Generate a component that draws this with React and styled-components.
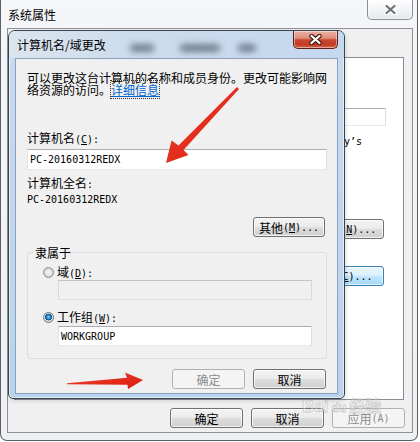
import React from "react";
import styled, { createGlobalStyle, css } from "styled-components";

const CJK = `"Noto Sans CJK SC", "Noto Sans", sans-serif`;
const MONO = `"DejaVu Sans Mono", "Liberation Mono", monospace`;

const Global = createGlobalStyle`
  html, body { margin: 0; padding: 0; background: #ffffff; }
  body { font-family: ${CJK}; font-size: 12px; color: #000; }
  * { box-sizing: border-box; }
`;

const Screen = styled.div`
  position: relative;
  width: 420px;
  height: 442px;
  overflow: hidden;
  background: #ffffff;
`;

const OuterWindow = styled.div`
  position: relative;
  width: 418px;
  height: 441px;
  display: flex;
  flex-direction: column;
  padding: 0 4px 7px 6px;
  border: 1px solid #5b5e63;
  border-top: none;
  border-radius: 0 0 7px 7px;
  background: linear-gradient(180deg, #f4f6f9 0%, #eef0f3 100%);
`;

const TitleBar = styled.div`
  height: ${(p) => p.$h}px;
  flex: none;
  display: flex;
  align-items: flex-start;
  ${(p) =>
    p.$glass &&
    css`
      padding-left: 8px;
      background: linear-gradient(90deg, #dbe5ef 0%, #cddcec 35%, #c4d8ef 100%);
    `}
`;

const TitleText = styled.div`
  margin: ${(p) => p.$mt}px 0 0 ${(p) => p.$ml}px;
  line-height: 14px;
  font-size: 12px;
  color: #000;
  white-space: nowrap;
`;

const GlassBlob = styled.div`
  width: ${(p) => p.$w}px;
  height: 8px;
  margin: 13px 0 0 ${(p) => p.$ml}px;
  border-radius: 4px;
  background: rgba(55, 66, 82, 0.6);
  filter: blur(3px);
`;

const CaptionClose = styled.div`
  margin-left: auto;
  margin-right: ${(p) => p.$mr}px;
  width: ${(p) => p.$w}px;
  height: ${(p) => p.$h}px;
  display: flex;
  align-items: center;
  justify-content: center;
  border: 1px solid ${(p) => (p.$red ? "#5f1f16" : "#8b9097")};
  border-top: none;
  border-radius: 0 0 5px 5px;
  background: ${(p) =>
    p.$red
      ? "linear-gradient(180deg, #eab3a6 0%, #df8c79 42%, #c9472f 52%, #c23b25 80%, #d4654b 100%)"
      : "linear-gradient(180deg, #fdfdfd 0%, #f2f4f6 50%, #e5e8eb 100%)"};
  box-shadow: inset 0 0 0 1px rgba(255, 255, 255, 0.45);
`;

const XGlyph = ({ fill, stroke }) => (
  <svg width="13" height="11" viewBox="0 0 13 11">
    <path d="M2.5 2 L10.5 9 M10.5 2 L2.5 9" stroke={stroke} strokeWidth="4.4" strokeLinecap="round" fill="none" />
    <path d="M2.5 2 L10.5 9 M10.5 2 L2.5 9" stroke={fill} strokeWidth="2.3" strokeLinecap="round" fill="none" />
  </svg>
);

const OuterClient = styled.div`
  flex: 1;
  display: flex;
  flex-direction: column;
  border: 1px solid #8e9095;
  background: #f0f0f0;
  padding: 28px 0 4px 6px;
`;

const TabPanel = styled.div`
  height: 343px;
  flex: none;
  margin-right: 8px;
  border: 1px solid #898c95;
  background: #ffffff;
  display: flex;
  flex-direction: column;
  align-items: flex-end;
  padding-top: 50px;
`;

const PanelItem = styled.div`
  margin-top: ${(p) => p.$mt || 0}px;
  margin-right: ${(p) => p.$mr || 0}px;
  align-self: ${(p) => (p.$end ? "flex-end" : "auto")};
`;

const MonoText = styled.div`
  margin-top: ${(p) => p.$mt || 0}px;
  font-family: ${MONO};
  font-size: 10px;
  line-height: ${(p) => p.$lh || 12}px;
  white-space: nowrap;
  color: #000;
`;

const ButtonRow = styled.div`
  display: flex;
  justify-content: flex-end;
  gap: 8px;
  margin-top: ${(p) => p.$mt}px;
  margin-right: ${(p) => p.$mr}px;
`;

const WinButton = styled.div`
  width: ${(p) => p.$w || 73}px;
  height: ${(p) => p.$h || 20}px;
  flex: none;
  display: flex;
  align-items: center;
  justify-content: center;
  border-radius: 3px;
  font-size: 12px;
  white-space: nowrap;
  border: 1px solid #707070;
  color: #000;
  background: linear-gradient(180deg, #f3f3f3 0%, #ebebeb 48%, #dddddd 52%, #cfcfcf 100%);
  box-shadow: inset 0 0 0 1px rgba(255, 255, 255, 0.75);
  ${(p) =>
    p.$disabled &&
    css`
      border-color: #adb2b5;
      color: #8c8c8c;
      background: #f4f4f4;
      box-shadow: none;
    `}
  ${(p) =>
    p.$focus &&
    css`
      border-color: #3c7fb1;
      background: linear-gradient(180deg, #eaf6fd 0%, #d9f0fc 48%, #bee6fd 52%, #a7d9f5 100%);
      box-shadow: inset 0 0 0 1px rgba(255, 255, 255, 0.6);
    `}
`;

const Key = styled.span`
  font-family: ${MONO};
  font-size: 10px;
`;

const U = styled.span`
  text-decoration: underline;
`;

const Dialog = styled.div`
  position: absolute;
  left: 7px;
  top: 30px;
  width: 337px;
  height: 369px;
  display: flex;
  flex-direction: column;
  border: 1px solid #36424f;
  border-radius: 7px 7px 5px 5px;
  background: linear-gradient(180deg, #c8dbef 0%, #bad2ec 100%);
  box-shadow: inset 0 0 0 1px rgba(255, 255, 255, 0.55), 1px 2px 4px rgba(0, 0, 0, 0.12);
  overflow: hidden;
`;

const DialogClient = styled.div`
  flex: 1;
  margin: 0 6px 4px 6px;
  border: 1px solid #8aa2bf;
  background: #f0f0f0;
  display: flex;
  flex-direction: column;
  padding: 13px 10px 0 11px;
`;

const Intro = styled.div`
  line-height: 12px;
  font-size: 12px;
  white-space: nowrap;
`;

const Link = styled.span`
  color: #0066cc;
  text-decoration: underline;
  outline: 1px dotted #333;
  outline-offset: 0;
`;

const Label = styled.div`
  margin-top: ${(p) => p.$mt}px;
  line-height: 13px;
  font-size: 12px;
  white-space: nowrap;
`;

const TextBox = styled.div`
  margin-top: ${(p) => p.$mt || 0}px;
  margin-left: ${(p) => p.$ml || 0}px;
  width: ${(p) => p.$w}px;
  height: ${(p) => p.$h || 21}px;
  flex: none;
  display: flex;
  align-items: center;
  padding-left: 2px;
  border: 1px solid;
  border-color: #abadb3 #dbdfe6 #e3e9ef #e2e3ea;
  background: ${(p) => (p.$disabled ? "#f0f0f0" : "#ffffff")};
  ${(p) =>
    p.$disabled &&
    css`
      border-color: #c2c4c8 #d6d8dc #dddfe2 #d6d8dc;
    `}
  font-family: ${MONO};
  font-size: 10px;
`;

const Group = styled.fieldset`
  margin: 9px 0 0 0;
  min-width: 0;
  padding: 6px 14px 12px 15px;
  border: 1px solid #d5dfe5;
  border-radius: 3px;
  display: flex;
  flex-direction: column;
`;

const Legend = styled.legend`
  margin-left: -10px;
  padding: 0 2px;
  line-height: 13px;
  font-size: 12px;
`;

const RadioRow = styled.div`
  margin-top: ${(p) => p.$mt || 0}px;
  display: flex;
  align-items: center;
  gap: 3px;
  line-height: 13px;
  font-size: 12px;
`;

const Radio = styled.span`
  width: 11px;
  height: 11px;
  flex: none;
  border-radius: 50%;
  border: 1px solid #8d8f93;
  background: radial-gradient(circle at 50% 50%, #fbfbfb 0px, #e6e6e6 2.5px, #cdcdcd 4.5px);
  ${(p) =>
    p.$checked &&
    css`
      border-color: #6f7478;
      background: radial-gradient(
        circle at 50% 45%,
        #9fe0fb 0px,
        #2a8fd1 1.6px,
        #0c4f8c 3.2px,
        #e9eef2 3.7px,
        #d2d4d6 4.6px
      );
    `}
`;

const ArrowLayer = styled.svg`
  position: absolute;
  left: 0;
  top: 0;
  width: 420px;
  height: 442px;
  pointer-events: none;
`;

const Watermark = styled.div`
  position: absolute;
  left: 302px;
  top: 393px;
  display: flex;
  align-items: baseline;
  gap: 3px;
  pointer-events: none;
  font-family: "Liberation Sans", ${CJK};
  font-weight: bold;
  font-size: 17px;
  color: rgba(255, 255, 255, 0.35);
  -webkit-text-stroke: 0.8px rgba(130, 130, 130, 0.35);
`;

const WatermarkSmall = styled.span`
  font-size: 12px;
`;

const WatermarkCJK = styled.span`
  font-family: ${CJK};
  font-size: 16px;
`;

export default function App() {
  return (
    <Screen>
      <Global />
      <OuterWindow>
        <TitleBar $h={28}>
          <TitleText $mt={8} $ml={1}>系统属性</TitleText>
          <CaptionClose $w={46} $h={20} $mr={0}>
            <XGlyph fill="#6f747b" stroke="#ffffff" />
          </CaptionClose>
        </TitleBar>
        <OuterClient>
          <TabPanel>
            <PanelItem $mr={17}>
              <TextBox $w={250} $h={18} />
            </PanelItem>
            <PanelItem $mt={9} $mr={41}>
              <MonoText $lh={13}>例如: "Kitchen Computer" 或 "Mary’s</MonoText>
            </PanelItem>
            <PanelItem $mt={71} $mr={19}>
              <WinButton $w={90}>
                网络 ID<Key>(<U>N</U>)...</Key>
              </WinButton>
            </PanelItem>
            <PanelItem $mt={27} $mr={19}>
              <WinButton $w={83} $focus>
                更改<Key>(<U>C</U>)...</Key>
              </WinButton>
            </PanelItem>
          </TabPanel>
          <ButtonRow $mt={8} $mr={7}>
            <WinButton>确定</WinButton>
            <WinButton>取消</WinButton>
            <WinButton $disabled>
              应用<Key>(A)</Key>
            </WinButton>
          </ButtonRow>
        </OuterClient>

        <Dialog>
          <TitleBar $h={27} $glass>
            <TitleText $mt={7} $ml={0}>计算机名/域更改</TitleText>
            <GlassBlob $w={24} $ml={24} />
            <GlassBlob $w={40} $ml={26} />
            <GlassBlob $w={18} $ml={18} />
            <CaptionClose $red $w={45} $h={18} $mr={6}>
              <XGlyph fill="#ffffff" stroke="#4a1a12" />
            </CaptionClose>
          </TitleBar>
          <DialogClient>
            <Intro>
              可以更改这台计算机的名称和成员身份。更改可能影响网
              <br />
              络资源的访问。<Link>详细信息</Link>
            </Intro>
            <Label $mt={35}>
              计算机名<Key>(<U>C</U>):</Key>
            </Label>
            <TextBox $mt={3} $w={300} $h={21}>PC-20160312REDX</TextBox>
            <Label $mt={6}>
              计算机全名<Key>:</Key>
            </Label>
            <MonoText $mt={3}>PC-20160312REDX</MonoText>
            <PanelItem $mt={11} $mr={2} $end>
              <WinButton $w={72}>
                其他<Key>(<U>M</U>)...</Key>
              </WinButton>
            </PanelItem>
            <Group>
              <Legend>隶属于</Legend>
              <RadioRow>
                <Radio />
                <span>
                  域<Key>(<U>D</U>):</Key>
                </span>
              </RadioRow>
              <TextBox $ml={15} $w={254} $h={20} $disabled />
              <RadioRow $mt={10}>
                <Radio $checked />
                <span>
                  工作组<Key>(<U>W</U>):</Key>
                </span>
              </RadioRow>
              <TextBox $mt={1} $ml={15} $w={254} $h={20}>WORKGROUP</TextBox>
            </Group>
            <ButtonRow $mt={10} $mr={1}>
              <WinButton $disabled>确定</WinButton>
              <WinButton>取消</WinButton>
            </ButtonRow>
          </DialogClient>
        </Dialog>
      </OuterWindow>

      <Watermark>
        <span>Bai</span>
        <WatermarkSmall>du</WatermarkSmall>
        <WatermarkCJK>经验</WatermarkCJK>
      </Watermark>

      <ArrowLayer viewBox="0 0 420 442">
        <defs>
          <linearGradient id="arrowRed" x1="0" y1="0" x2="1" y2="1">
            <stop offset="0" stopColor="#f0402c" />
            <stop offset="1" stopColor="#d91d10" />
          </linearGradient>
        </defs>
        <polygon
          points="239,89 183.5,150 188.5,155 166,163 171.5,140.5 178.5,145.5 237,87"
          fill="url(#arrowRed)"
        />
        <polygon
          points="67,383.2 127,377.8 125,372.5 143,380 128,389 127.5,384.8 67,384.2"
          fill="url(#arrowRed)"
        />
      </ArrowLayer>
    </Screen>
  );
}
